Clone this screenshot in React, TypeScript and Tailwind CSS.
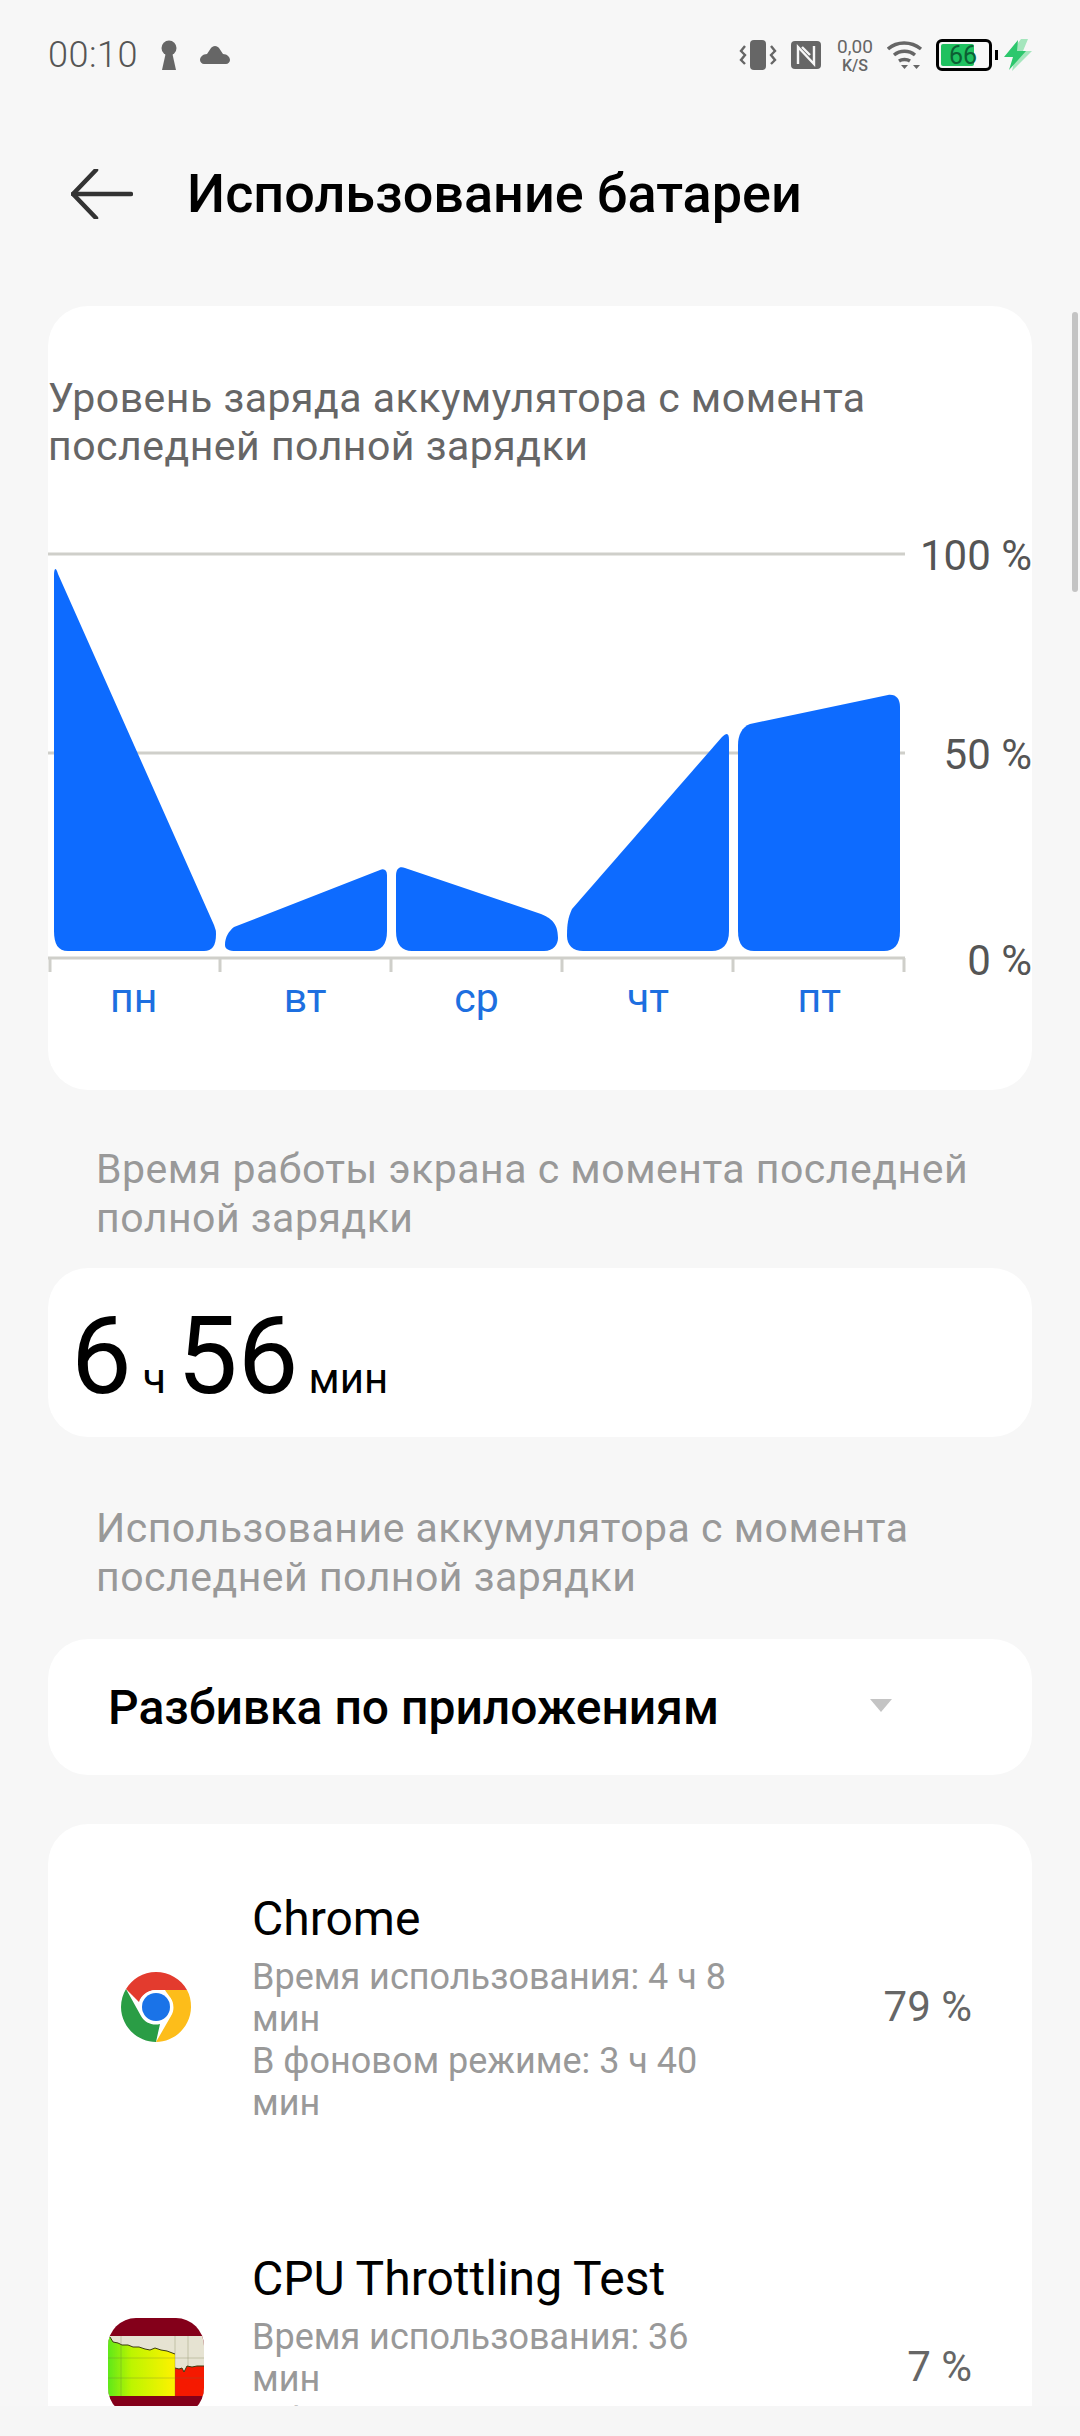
import React from "react"

const Keyhole = () => (
  <svg width="18" height="30" viewBox="0 0 18 30" fill="#666">
    <circle cx="9" cy="8" r="7.5" />
    <path d="M6 12h6l4 18H2z" />
  </svg>
)

const Cloud = () => (
  <svg width="30" height="18" viewBox="0 0 30 18" fill="#666">
    <path d="M15 0c2 0 3 1 4 2l4 6c4 0 7 3 7 6 0 2-2 4-4 4H4c-2 0-4-2-4-4 0-3 3-6 7-6l4-6c1-1 2-2 4-2z" />
  </svg>
)

const Vibrate = () => (
  <svg width="38" height="30" viewBox="0 0 38 30" fill="none">
    <rect x="11" y="0" width="16" height="30" rx="4" fill="#666" />
    <path d="M6 6 2 11l4 4-4 5 4 4M32 6l4 5-4 4 4 5-4 4" stroke="#666" strokeWidth="2.4" />
  </svg>
)

const Nfc = () => (
  <svg width="30" height="28" viewBox="0 0 30 28">
    <rect width="30" height="28" rx="4" fill="#666" />
    <path d="M7 23V6l16 17V5M11 6l8 8" stroke="#f7f7f7" strokeWidth="2.4" fill="none" />
  </svg>
)

const Wifi = () => (
  <svg width="36" height="30" viewBox="0 0 36 30" fill="none" stroke="#666" strokeWidth="3.4">
    <path d="M1 9c9-8 23-8 33 0" />
    <path d="M7 15c6-5 15-5 21 0" />
    <path d="M12 21c3-2 8-2 11 0" />
    <path d="M14 25h7l-3.500 4zM26 25h7l-3.500 4z" fill="#666" stroke="none" />
  </svg>
)

const Battery = () => (
  <div className="flex items-center">
    <div className="relative flex h-[32px] w-[56px] items-center rounded-[6px] border-[3px] border-black p-[2px]">
      <div className="h-full w-[33px] rounded-[2px] bg-[#1fc160]" />
      <span className="absolute inset-x-[10px] top-[1px] text-[25px] leading-[25px] text-[#0c5f33]">66</span>
    </div>
    <div className="ml-[3px] h-[10px] w-[3px] bg-black" />
  </div>
)

const Bolt = () => (
  <svg width="28" height="32" viewBox="0 0 28 32">
    <path d="M17 0 3 18h8L8 32l20-20h-9l5-12z" fill="#a5e6bd" />
    <path d="M14 1 0 18h9L5 31l17-19h-9z" fill="#2dc76d" />
  </svg>
)

const ArrowBack = () => (
  <svg width="62" height="50" viewBox="0 0 62 50" fill="none" stroke="#333" strokeWidth="4.500" strokeLinecap="round" strokeLinejoin="round">
    <path d="M60 25H2" />
    <path d="M25 1 2 25l23 24" />
  </svg>
)

const Chart = () => (
  <svg width="862" height="430" viewBox="0 0 862 430" className="block">
    <g stroke="#cfcfca" strokeWidth="3" fill="none">
      <path d="M0 8h857M0 207h857M0 412h857" />
      <path d="M2 412v14M172 412v14M343 412v14M514 412v14M685 412v14M856 412v14" />
    </g>
    <g fill="#0d6bff">
      <path d="M6 30c0-9 2-9 4-2l156 351c2 6 2 5 2 9 0 12-4 17-12 17H20C10 405 6 398 6 385z" />
      <path d="M177 399c0-8 4-14 9-18l146-57c4-2 7 0 7 5v56c0 14-6 20-16 20H188c-7 0-11-2-11-6z" />
      <path d="M348 330c0-8 4-10 9-8l136 46c9 4 17 8 17 24v0c0 6-4 13-14 13H364c-10 0-16-6-16-20z" />
      <path d="M519 390c0-12 1-18 5-27l150-172c5-5 7-4 7 3v191c0 14-7 20-17 20H535c-10 0-16-6-16-15z" />
      <path d="M690 199c0-10 4-18 12-21l138-29c8-1 12 4 12 12v224c0 14-6 20-16 20H706c-10 0-16-6-16-20z" />
    </g>
  </svg>
)

const ChromeIcon = () => (
  <svg width="70" height="70" viewBox="0 0 70 70" className="shrink-0">
    <circle cx="35" cy="35" r="35" fill="#fff" />
    <path d="M35 0c13 0 25 7 31 18H35c-8 0-15 5-17 12L5 17C11 7 22 0 35 0z" fill="#e33b2e" />
    <path d="M66 18c3 5 4 11 4 17 0 19-16 35-35 35l15-26c4-6 3-15-2-20-1-2-3-4-4-6z" fill="#fdbd1a" />
    <path d="M5 17 20 44c4 7 12 10 19 8L35 70C16 70 0 54 0 35c0-7 2-13 5-18z" fill="#2a9d45" />
    <circle cx="35" cy="35" r="17" fill="#fff" />
    <circle cx="35" cy="35" r="14" fill="#1a73e8" />
  </svg>
)

const ThrottleIcon = () => (
  <svg width="96" height="98" viewBox="0 0 96 98" className="shrink-0">
    <defs>
      <clipPath id="squircle">
        <rect x="0" y="0" width="96" height="98" rx="28" />
      </clipPath>
      <linearGradient id="heat" x1="0" x2="1" y1="0" y2="0">
        <stop offset="0" stopColor="#5fe81a" />
        <stop offset="0.35" stopColor="#bdf500" />
        <stop offset="1" stopColor="#fff200" />
      </linearGradient>
    </defs>
    <g clipPath="url(#squircle)">
      <rect width="96" height="98" fill="#84001a" />
      <rect y="18" width="96" height="60" fill="#e6e3d2" />
      <path d="M2 19l3 5 5 1 4 2 6 0 5 2 6 0 6 2 5 1 5-2 6 2 6 1 8 3v42H0V19z" fill="url(#heat)" />
      <path d="M67 50l4 1 3-1 2 4 3-6 5 1 5-1 7 0v30H67z" fill="#f51a00" />
      <path d="M2 19l3 5 5 1 4 2 6 0 5 2 6 0 6 2 5 1 5-2 6 2 6 1 8 3" fill="none" stroke="#3d3d10" strokeWidth="1" />
      <path d="M67 50l4 1 3-1 2 4 3-6 5 1 5-1 7 0" fill="none" stroke="#3d3d10" strokeWidth="1" />
      <path d="M13 18v60M67 18v60M80 18v30M0 40h96M0 60h96" stroke="#6d6d40" strokeWidth="0.500" opacity="0.6" />
    </g>
  </svg>
)

const days = ["пн", "вт", "ср", "чт", "пт"]

const apps = [
  {
    name: "Chrome",
    icon: <ChromeIcon />,
    lines: ["Время использования: 4 ч 8 мин", "В фоновом режиме: 3 ч 40 мин"],
    percent: "79 %",
  },
  {
    name: "CPU Throttling Test",
    icon: <ThrottleIcon />,
    lines: ["Время использования: 36 мин", "В фоновом режиме: 1 ч 10 мин"],
    percent: "7 %",
  },
]

export default function App() {
  return (
    <div className="relative h-[2436px] w-[1080px] overflow-hidden bg-[#f7f7f7] font-['Roboto',sans-serif]">
      <header className="flex h-[110px] items-center justify-between pl-[48px] pr-[48px]">
        <div className="flex items-center gap-[22px]">
          <span className="text-[36px] font-light tracking-[0.5px] text-[#555]">00:10</span>
          <Keyhole />
          <Cloud />
        </div>
        <div className="flex items-center">
          <Vibrate />
          <div className="ml-[14px]"><Nfc /></div>
          <div className="ml-[14px] flex w-[40px] flex-col items-center text-[#666]">
            <span className="text-[19px] leading-[20px]">0,00</span>
            <span className="text-[16px] font-medium leading-[17px]">K/S</span>
          </div>
          <div className="ml-[12px]"><Wifi /></div>
          <div className="ml-[13px]"><Battery /></div>
          <div className="ml-[6px]"><Bolt /></div>
        </div>
      </header>

      <div className="mt-[42px] flex h-[84px] items-center pl-[71px]">
        <ArrowBack />
        <h1 className="ml-[54px] text-[54px] font-medium leading-[60px] text-black">Использование батареи</h1>
      </div>

      <section className="mx-[48px] mt-[70px] h-[784px] rounded-[40px] bg-white">
        <p className="pt-[68px] text-[41px] leading-[48px] tracking-[0.5px] text-[#666]">
          Уровень заряда аккумулятора с момента
          <br />
          последней полной зарядки
        </p>
        <div className="mt-[76px] flex">
          <div className="w-[857px] shrink-0">
            <Chart />
            <div className="grid grid-cols-5 text-center text-[41px] leading-[44px] text-[#1d6fe0]">
              {days.map((day) => (
                <span key={day}>{day}</span>
              ))}
            </div>
          </div>
          <div className="flex h-[437px] flex-1 flex-col items-end justify-between whitespace-nowrap text-[42px] leading-[44px] text-[#555]">
            <span className="-mt-[12px]">100 %</span>
            <span className="-mt-[13px]">50 %</span>
            <span className="-mt-[6px]">0 %</span>
          </div>
        </div>
      </section>

      <p className="ml-[96px] mt-[55px] text-[41px] leading-[49px] tracking-[0.5px] text-[#999]">
        Время работы экрана с момента последней
        <br />
        полной зарядки
      </p>

      <section className="mx-[48px] mt-[25px] flex h-[169px] items-baseline rounded-[40px] bg-white pl-[23px] pt-[28px] text-black">
        <span className="text-[108px] leading-[120px]">6</span>
        <span className="ml-[11px] text-[43px]">ч</span>
        <span className="ml-[11px] text-[108px] leading-[120px]">56</span>
        <span className="ml-[10px] text-[42px]">мин</span>
      </section>

      <p className="ml-[96px] mt-[67px] text-[41px] leading-[49px] tracking-[0.5px] text-[#999]">
        Использование аккумулятора с момента
        <br />
        последней полной зарядки
      </p>

      <section className="mx-[48px] mt-[37px] flex h-[136px] items-center justify-between rounded-[40px] bg-white pl-[60px] pr-[140px]">
        <span className="pt-[2px] text-[48px] font-medium text-black">Разбивка по приложениям</span>
        <span className="-mt-[4px] h-0 w-0 border-x-[11px] border-t-[13px] border-x-transparent border-t-[#c4c4c4]" />
      </section>

      <section className="mx-[48px] mt-[49px] rounded-t-[40px] bg-white pt-[65px]">
        {apps.map((app) => (
          <div key={app.name} className="mb-[125px] flex items-center pl-[60px] pr-[60px]">
            <div className="flex w-[96px] shrink-0 justify-center">{app.icon}</div>
            <div className="ml-[48px] w-[500px]">
              <div className="mb-[7px] text-[48px] leading-[60px] text-black">{app.name}</div>
              {app.lines.map((line) => (
                <div key={line} className="text-[36px] leading-[42px] text-[#999]">{line}</div>
              ))}
            </div>
            <div className="flex-1 text-right text-[42px] text-[#666]">{app.percent}</div>
          </div>
        ))}
      </section>

      <div className="absolute right-[2px] top-[312px] h-[280px] w-[6px] rounded-full bg-[#c4c4c4]" />
      <div className="absolute bottom-0 left-0 h-[30px] w-full bg-[#f6f6f6]" />
    </div>
  )
}
